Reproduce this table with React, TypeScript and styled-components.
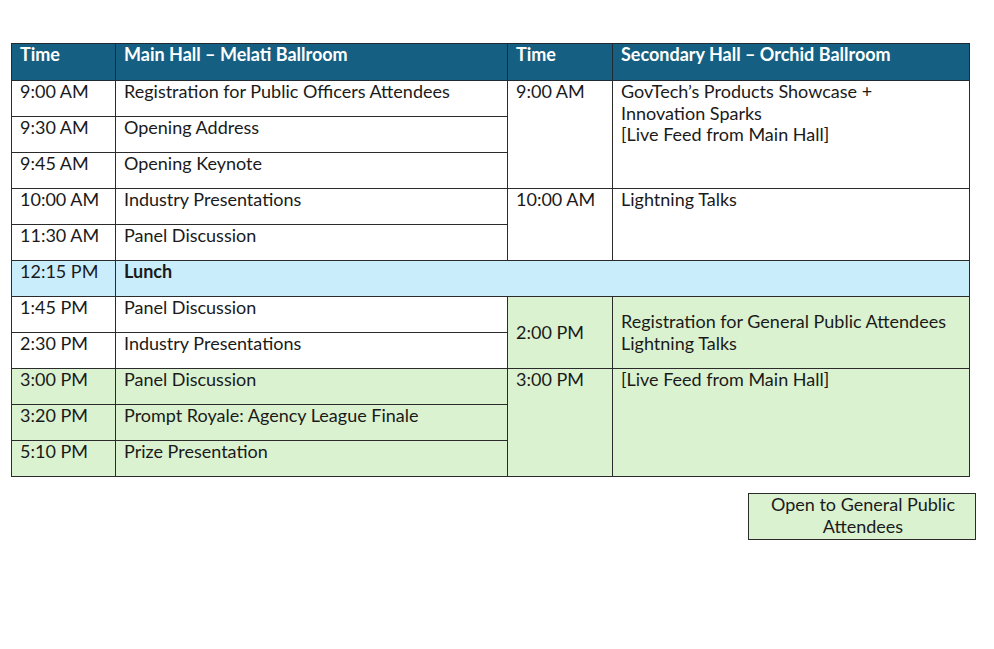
import styled, { createGlobalStyle } from "styled-components";

type Fill = "white" | "green" | "blue";

const fills: Record<Fill, string> = {
  white: "#ffffff",
  green: "#daf2d0",
  blue: "#caedfb",
};

export default function App() {
  return (
    <>
      <GlobalStyle />
      <StyledPage>
        <StyledTable>
          <colgroup>
            <col style={{ width: 104 }} />
            <col style={{ width: 392 }} />
            <col style={{ width: 105 }} />
            <col style={{ width: 357 }} />
          </colgroup>
          <thead>
            <tr>
              <StyledHeadCell>Time</StyledHeadCell>
              <StyledHeadCell>Main Hall – Melati Ballroom</StyledHeadCell>
              <StyledHeadCell>Time</StyledHeadCell>
              <StyledHeadCell>Secondary Hall – Orchid Ballroom</StyledHeadCell>
            </tr>
          </thead>
          <tbody>
            <StyledRow>
              <StyledCell>9:00 AM</StyledCell>
              <StyledCell>Registration for Public Officers Attendees</StyledCell>
              <StyledCell rowSpan={3}>9:00 AM</StyledCell>
              <StyledCell rowSpan={3}>
                GovTech’s Products Showcase +
                <br />
                Innovation Sparks
                <br />
                [Live Feed from Main Hall]
              </StyledCell>
            </StyledRow>
            <StyledRow>
              <StyledCell>9:30 AM</StyledCell>
              <StyledCell>Opening Address</StyledCell>
            </StyledRow>
            <StyledRow>
              <StyledCell>9:45 AM</StyledCell>
              <StyledCell>Opening Keynote</StyledCell>
            </StyledRow>
            <StyledRow>
              <StyledCell>10:00 AM</StyledCell>
              <StyledCell>Industry Presentations</StyledCell>
              <StyledCell rowSpan={2}>10:00 AM</StyledCell>
              <StyledCell rowSpan={2}>Lightning Talks</StyledCell>
            </StyledRow>
            <StyledRow>
              <StyledCell>11:30 AM</StyledCell>
              <StyledCell>Panel Discussion</StyledCell>
            </StyledRow>
            <StyledRow>
              <StyledCell fill="blue">12:15 PM</StyledCell>
              <StyledCell fill="blue" colSpan={3} bold>
                Lunch
              </StyledCell>
            </StyledRow>
            <StyledRow>
              <StyledCell>1:45 PM</StyledCell>
              <StyledCell>Panel Discussion</StyledCell>
              <StyledCell fill="green" rowSpan={2} middle>
                2:00 PM
              </StyledCell>
              <StyledCell fill="green" rowSpan={2} middle>
                Registration for General Public Attendees
                <br />
                Lightning Talks
              </StyledCell>
            </StyledRow>
            <StyledRow>
              <StyledCell>2:30 PM</StyledCell>
              <StyledCell>Industry Presentations</StyledCell>
            </StyledRow>
            <StyledRow>
              <StyledCell fill="green">3:00 PM</StyledCell>
              <StyledCell fill="green">Panel Discussion</StyledCell>
              <StyledCell fill="green" rowSpan={3}>
                3:00 PM
              </StyledCell>
              <StyledCell fill="green" rowSpan={3}>
                [Live Feed from Main Hall]
              </StyledCell>
            </StyledRow>
            <StyledRow>
              <StyledCell fill="green">3:20 PM</StyledCell>
              <StyledCell fill="green">Prompt Royale: Agency League Finale</StyledCell>
            </StyledRow>
            <StyledRow>
              <StyledCell fill="green">5:10 PM</StyledCell>
              <StyledCell fill="green">Prize Presentation</StyledCell>
            </StyledRow>
          </tbody>
        </StyledTable>
        <StyledLegendRow>
          <StyledLegend>
            Open to General Public
            <br />
            Attendees
          </StyledLegend>
        </StyledLegendRow>
      </StyledPage>
    </>
  );
}

const GlobalStyle = createGlobalStyle`
  html, body {
    margin: 0;
    padding: 0;
    background: #ffffff;
  }

  body {
    font-family: Lato, "Open Sans", sans-serif;
    color: #1a1a1a;
  }
`;

const StyledPage = styled.div`
  display: flex;
  flex-direction: column;
  gap: 16px;
  width: 994px;
  min-height: 649px;
  padding: 43px 0 0 11px;
  box-sizing: border-box;
`;

const StyledTable = styled.table`
  width: 958px;
  table-layout: fixed;
  border-collapse: collapse;
  font-size: 18px;
  line-height: 21.5px;
`;

const StyledHeadCell = styled.th`
  height: 37px;
  padding: 0 8px;
  box-sizing: border-box;
  vertical-align: top;
  text-align: left;
  font-weight: 700;
  color: #ffffff;
  background: #156082;
  border: 1px solid #1f2a33;
`;

const StyledRow = styled.tr`
  height: 36px;
`;

const StyledCell = styled.td<{ fill?: Fill; bold?: boolean; middle?: boolean }>`
  padding: 0 8px;
  box-sizing: border-box;
  vertical-align: ${(p) => (p.middle ? "middle" : "top")};
  font-weight: ${(p) => (p.bold ? 700 : 400)};
  background: ${(p) => fills[p.fill ?? "white"]};
  border: 1px solid #2b2b2b;
`;

const StyledLegendRow = styled.div`
  display: flex;
  justify-content: flex-end;
  padding-right: 18px;
`;

const StyledLegend = styled.div`
  width: 228px;
  height: 47px;
  padding: 0 0 4px 2px;
  box-sizing: border-box;
  display: flex;
  align-items: center;
  justify-content: center;
  text-align: center;
  font-size: 18px;
  line-height: 22px;
  background: #daf2d0;
  border: 1px solid #2b2b2b;
`;
